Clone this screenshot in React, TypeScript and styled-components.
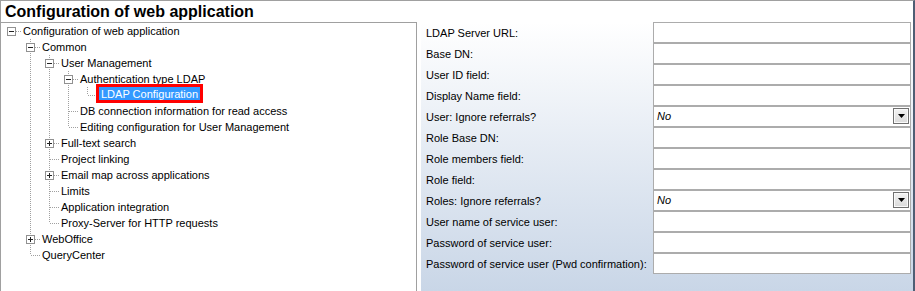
import React from 'react';
import styled, { createGlobalStyle } from 'styled-components';

const GlobalStyle = createGlobalStyle`
  html, body {
    margin: 0;
    padding: 0;
    background: #ffffff;
  }
  body {
    font-family: "Liberation Sans", Arial, sans-serif;
    font-size: 11px;
    color: #000;
  }
`;

const LINE = '#a0a0a0';

const Page = styled.div`
  box-sizing: border-box;
  width: 915px;
  height: 291px;
  overflow: hidden;
  display: flex;
  flex-direction: column;
  border-top: 1px solid #a0a0a0;
  border-left: 1px solid #a0a0a0;
  border-right: 2px solid #4f5e74;
  background: #fff;
`;

const TitleBar = styled.div`
  height: 21px;
  line-height: 21px;
  padding-left: 4px;
  font-size: 16px;
  font-weight: bold;
  white-space: nowrap;
`;

const Body = styled.div`
  flex: 1;
  display: flex;
  gap: 4px;
  min-height: 0;
`;

const TreePanel = styled.div`
  box-sizing: border-box;
  width: 416px;
  border-top: 1px solid #a0a0a0;
  border-right: 1px solid #a0a0a0;
  padding-left: 1px;
  background: #fff;
`;

const TreeRow = styled.div`
  display: flex;
  align-items: flex-start;
  height: 16px;
`;

const Label = styled.span<{ $selected?: boolean }>`
  height: ${(p) => (p.$selected ? '13px' : '16px')};
  line-height: ${(p) => (p.$selected ? '15px' : '16px')};
  margin-left: ${(p) => (p.$selected ? '2px' : '1px')};
  padding: ${(p) => (p.$selected ? '0 2px' : '0 1px')};
  white-space: nowrap;
  background: ${(p) => (p.$selected ? '#3399ff' : 'transparent')};
  color: ${(p) => (p.$selected ? '#fff' : '#000')};
  box-shadow: ${(p) => (p.$selected ? '0 0 0 3px #ff0000' : 'none')};
`;

const FormPanel = styled.div`
  flex: 1;
  box-sizing: border-box;
  padding: 0 2px 0 5px;
  background: linear-gradient(to bottom, #ffffff 0%, #e6ecf4 45%, #c9d6e7 100%);
`;

const FormRow = styled.div`
  display: grid;
  grid-template-columns: 227px 1fr;
  height: 21px;
`;

const FieldLabel = styled.div`
  box-sizing: border-box;
  padding-top: 1px;
  line-height: 21px;
  white-space: nowrap;
`;

const Field = styled.div`
  box-sizing: border-box;
  height: 21px;
  border: 1px solid #acacac;
  background: #fff;
  display: flex;
  align-items: flex-start;
`;

const ComboValue = styled.span`
  flex: 1;
  font-style: italic;
  line-height: 19px;
  padding-left: 3px;
`;

const DropButton = styled.div`
  box-sizing: border-box;
  width: 16px;
  height: 16px;
  margin: 1px 1px 0 0;
  border: 1px solid #707070;
  background: linear-gradient(to bottom, #f3f3f3, #dadada);
  box-shadow: inset 0 0 0 1px #fafafa;
  display: flex;
  align-items: center;
  justify-content: center;
`;

type Guide = ' ' | '|' | 'T' | 'L' | '-';
type Expander = 'minus' | 'plus' | undefined;

const GuideCell: React.FC<{ kind: Guide; expander?: Expander }> = ({ kind, expander }) => (
  <svg width="19" height="16" viewBox="0 0 19 16" style={{ flex: 'none', display: 'block' }}>
    {(kind === '|' || kind === 'T') && (
      <line x1="9.5" y1="0" x2="9.5" y2="16" stroke={LINE} strokeDasharray="1 1" />
    )}
    {kind === 'L' && <line x1="9.5" y1="0" x2="9.5" y2="8" stroke={LINE} strokeDasharray="1 1" />}
    {(kind === 'T' || kind === 'L' || kind === '-') && (
      <line x1="10" y1="8.5" x2="19" y2="8.5" stroke={LINE} strokeDasharray="1 1" />
    )}
    {expander && (
      <g>
        <rect x="5.5" y="4.5" width="8" height="8" fill="#fff" stroke="#919191" />
        <line x1="7" y1="8.5" x2="12" y2="8.5" stroke="#222" />
        {expander === 'plus' && <line x1="9.5" y1="6" x2="9.5" y2="11" stroke="#222" />}
      </g>
    )}
  </svg>
);

interface Node {
  label: string;
  guides: Guide[];
  expander?: Expander;
  selected?: boolean;
}

const tree: Node[] = [
  { label: 'Configuration of web application', guides: ['-'], expander: 'minus' },
  { label: 'Common', guides: [' ', 'T'], expander: 'minus' },
  { label: 'User Management', guides: [' ', '|', 'T'], expander: 'minus' },
  { label: 'Authentication type LDAP', guides: [' ', '|', '|', 'T'], expander: 'minus' },
  { label: 'LDAP Configuration', guides: [' ', '|', '|', '|', 'L'], selected: true },
  { label: 'DB connection information for read access', guides: [' ', '|', '|', 'T'] },
  { label: 'Editing configuration for User Management', guides: [' ', '|', '|', 'L'] },
  { label: 'Full-text search', guides: [' ', '|', 'T'], expander: 'plus' },
  { label: 'Project linking', guides: [' ', '|', 'T'] },
  { label: 'Email map across applications', guides: [' ', '|', 'T'], expander: 'plus' },
  { label: 'Limits', guides: [' ', '|', 'T'] },
  { label: 'Application integration', guides: [' ', '|', 'T'] },
  { label: 'Proxy-Server for HTTP requests', guides: [' ', '|', 'L'] },
  { label: 'WebOffice', guides: [' ', 'T'], expander: 'plus' },
  { label: 'QueryCenter', guides: [' ', 'L'] },
];

const fields: { label: string; combo?: string }[] = [
  { label: 'LDAP Server URL:' },
  { label: 'Base DN:' },
  { label: 'User ID field:' },
  { label: 'Display Name field:' },
  { label: 'User: Ignore referrals?', combo: 'No' },
  { label: 'Role Base DN:' },
  { label: 'Role members field:' },
  { label: 'Role field:' },
  { label: 'Roles: Ignore referrals?', combo: 'No' },
  { label: 'User name of service user:' },
  { label: 'Password of service user:' },
  { label: 'Password of service user (Pwd confirmation):' },
];

const App: React.FC = () => (
  <>
    <GlobalStyle />
    <Page>
      <TitleBar>Configuration of web application</TitleBar>
      <Body>
        <TreePanel>
          {tree.map((n) => (
            <TreeRow key={n.label}>
              {n.guides.map((g, i) => (
                <GuideCell
                  key={i}
                  kind={g}
                  expander={i === n.guides.length - 1 ? n.expander : undefined}
                />
              ))}
              <Label $selected={n.selected}>{n.label}</Label>
            </TreeRow>
          ))}
        </TreePanel>
        <FormPanel>
          {fields.map((f) => (
            <FormRow key={f.label}>
              <FieldLabel>{f.label}</FieldLabel>
              <Field>
                {f.combo && (
                  <>
                    <ComboValue>{f.combo}</ComboValue>
                    <DropButton>
                      <svg width="7" height="4" viewBox="0 0 7 4">
                        <polygon points="0,0 7,0 3.5,4" fill="#000" />
                      </svg>
                    </DropButton>
                  </>
                )}
              </Field>
            </FormRow>
          ))}
        </FormPanel>
      </Body>
    </Page>
  </>
);

export default App;
